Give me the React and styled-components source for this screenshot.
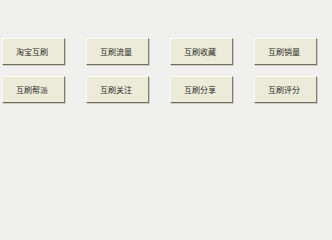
import React from "react";
import styled, { createGlobalStyle } from "styled-components";

const Global = createGlobalStyle`
  html, body { margin: 0; padding: 0; background: #f0f0ee; }
  #root { width: 332px; height: 206px; }
`;

const Panel = styled.div`
  width: 332px;
  height: 206px;
  box-sizing: border-box;
  padding: 38px 0 0 2px;
  display: grid;
  grid-template-columns: repeat(4, 63px);
  grid-auto-rows: 27px;
  column-gap: 21px;
  row-gap: 11px;
  align-content: start;
  background: #f0f0ee;
`;

const Button = styled.button`
  box-sizing: border-box;
  margin: 0;
  padding: 0 3px 0 0;
  width: 63px;
  height: 27px;
  background: #ecead8;
  border-style: solid;
  border-width: 1px;
  border-color: #fbfbf7 #7f7d72 #6f6d63 #fbfbf7;
  box-shadow: 1px 1px 0 #cfcdc2;
  font-family: "Noto Sans CJK SC", "Noto Sans", sans-serif;
  font-size: 8px;
  line-height: 1;
  color: #2a2a26;
  display: flex;
  align-items: center;
  justify-content: center;
  cursor: pointer;
`;

const labels = [
  "淘宝互刷",
  "互刷流量",
  "互刷收藏",
  "互刷销量",
  "互刷帮派",
  "互刷关注",
  "互刷分享",
  "互刷评分",
];

export default function App() {
  return (
    <>
      <Global />
      <Panel>
        {labels.map((l) => (
          <Button key={l}>{l}</Button>
        ))}
      </Panel>
    </>
  );
}
